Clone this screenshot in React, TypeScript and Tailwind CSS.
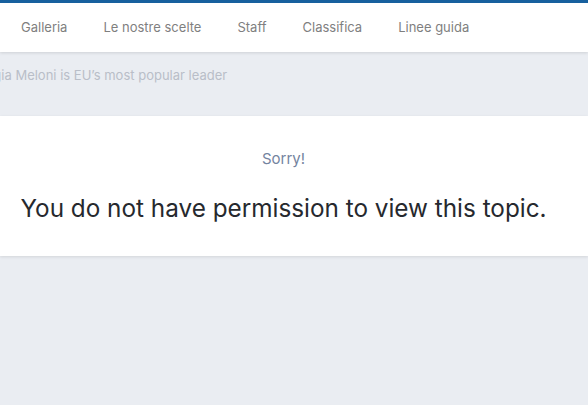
import React from 'react';

const NAV_ITEMS = ['Galleria', 'Le nostre scelte', 'Staff', 'Classifica', 'Linee guida'];

export default function App() {
  return (
    <div className="min-h-[405px] bg-[#eaedf2] font-['Inter',sans-serif] overflow-hidden">
      {/* Header nav */}
      <header className="bg-white border-t-[3px] border-[#17609e] shadow-[0_1px_3px_rgba(0,0,0,0.12)]">
        <nav className="flex items-center h-[49px] px-[3px]">
          {NAV_ITEMS.map((item) => (
            <a key={item} className="px-[18px] text-[13px] text-[#7f7f7f] whitespace-nowrap">
              {item}
            </a>
          ))}
        </nav>
      </header>

      {/* News ticker */}
      <div className="h-[64px] overflow-hidden pt-[14px]">
        <p className="ml-[-32px] text-[13px] text-[#b9bec8] whitespace-nowrap">
          Giorgia Meloni is EU’s most popular leader
        </p>
      </div>

      {/* Message card */}
      <div className="bg-white shadow-[0_1px_3px_rgba(0,0,0,0.1)] h-[140px] flex flex-col items-center pt-[32px] pr-[21px]">
        <p className="text-[15px] text-[#74849f]">Sorry!</p>
        <h1 className="mt-[19px] text-[24.3px] text-[#26292e] whitespace-nowrap">You do not have permission to view this topic.</h1>
      </div>
    </div>
  );
}
